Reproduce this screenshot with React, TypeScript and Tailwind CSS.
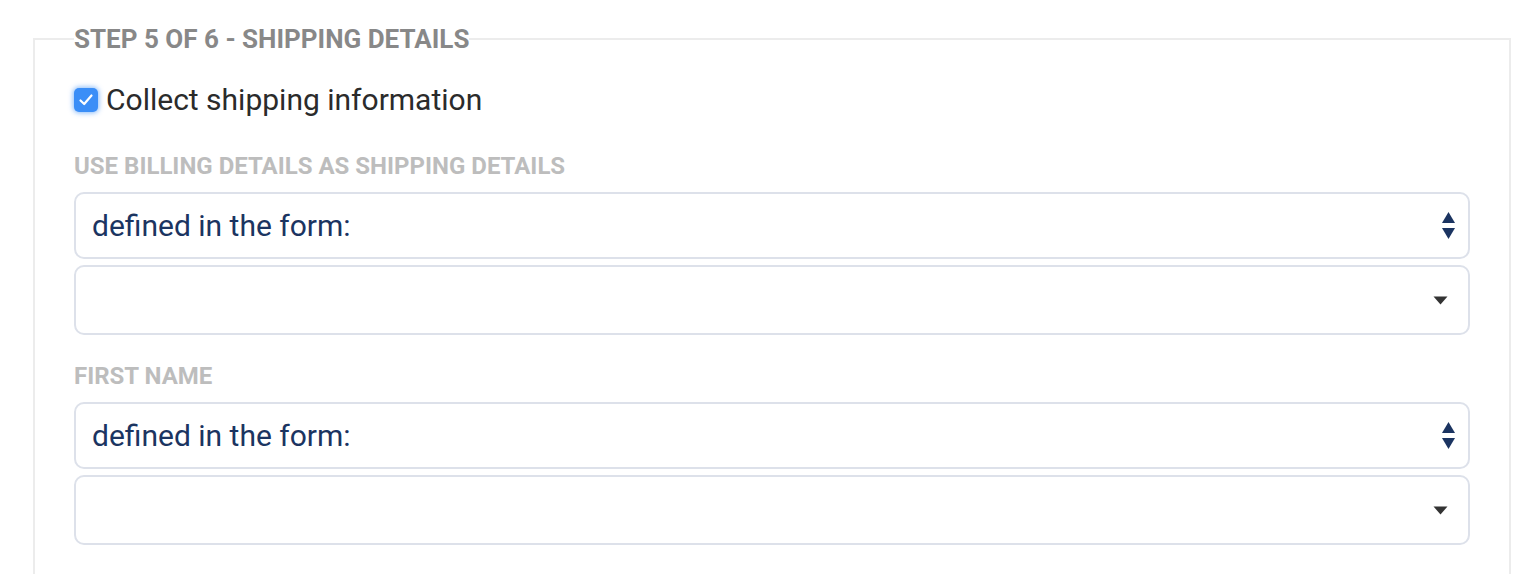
import React from "react";

function UpDown() {
  return (
    <svg width="15" height="30" viewBox="0 0 15 30" className="shrink-0">
      <path d="M7.5 1 L14 12 L1 12 Z" fill="#1b3461" />
      <path d="M1 17 L14 17 L7.5 28 Z" fill="#1b3461" />
    </svg>
  );
}

function Caret() {
  return (
    <svg width="15" height="9" viewBox="0 0 15 9" className="shrink-0">
      <path d="M0.5 0.5 L14.5 0.5 L7.5 8.5 Z" fill="#333333" />
    </svg>
  );
}

function SelectBox({ value }: { value: string }) {
  return (
    <div className="flex h-[67px] items-center justify-between rounded-[10px] border-2 border-[#dde1ea] bg-white pl-[16px] pr-[12px]">
      <span className="text-[30px] text-[#1b3461]">{value}</span>
      <UpDown />
    </div>
  );
}

function EmptySelect() {
  return (
    <div className="flex h-[70px] items-center justify-end rounded-[10px] border-2 border-[#dde1ea] bg-white pr-[20px]">
      <Caret />
    </div>
  );
}

function Field({ label }: { label: string }) {
  return (
    <div>
      <div className="text-[24px] font-bold leading-[28px] text-[#bdbdbd]">
        {label}
      </div>
      <div className="mt-[12px] flex flex-col gap-[6px]">
        <SelectBox value="defined in the form:" />
        <EmptySelect />
      </div>
    </div>
  );
}

export default function App() {
  return (
    <div
      className="h-[574px] w-[1534px] overflow-hidden bg-white pt-[25px]"
      style={{ fontFamily: "Roboto, 'Liberation Sans', sans-serif" }}
    >
      <fieldset className="ml-[33px] w-[1478px] border-2 border-[#ececec] px-[39px] pb-[40px]">
        <legend className="text-[26px] font-bold leading-[28px] text-[#888888]">
          STEP 5 OF 6 - SHIPPING DETAILS
        </legend>
        <label className="mt-[30px] flex items-center gap-[8px]">
          <span className="flex h-[24px] w-[24px] items-center justify-center rounded-[5px] bg-[#3b8ef7] shadow-[0_0_5px_1px_rgba(59,142,247,0.6)]">
            <svg width="16" height="16" viewBox="0 0 16 16">
              <path
                d="M2.5 8.5 L6.2 12 L13.5 3.5"
                stroke="white"
                strokeWidth="2.2"
                fill="none"
                strokeLinecap="round"
                strokeLinejoin="round"
              />
            </svg>
          </span>
          <span className="text-[30px] leading-[34px] text-[#2b2b2b]">
            Collect shipping information
          </span>
        </label>
        <div className="mt-[35px] flex flex-col gap-[27px]">
          <Field label="USE BILLING DETAILS AS SHIPPING DETAILS" />
          <Field label="FIRST NAME" />
        </div>
      </fieldset>
    </div>
  );
}
